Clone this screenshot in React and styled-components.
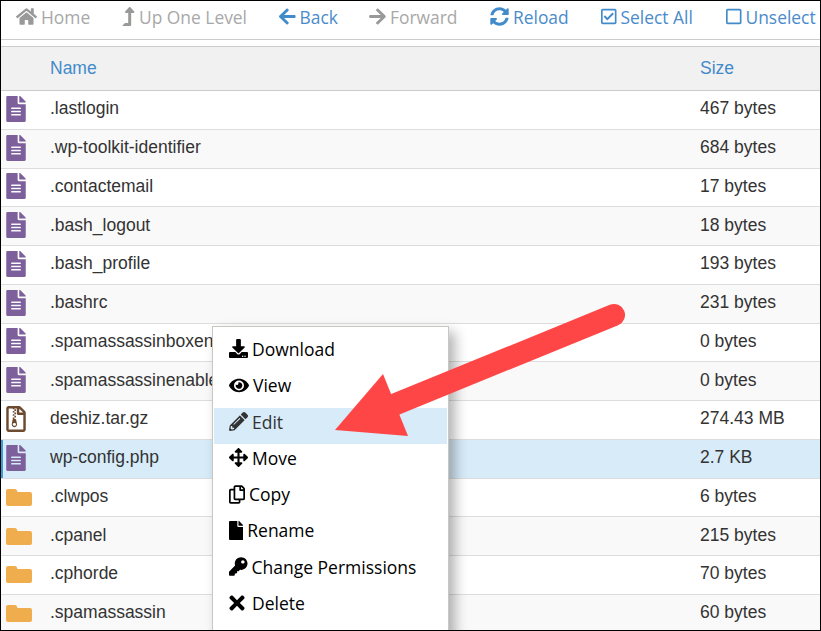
import React from 'react';
import styled, { createGlobalStyle } from 'styled-components';
import {
  FaHome, FaLevelUpAlt, FaArrowLeft, FaArrowRight, FaSyncAlt, FaRegCheckSquare, FaRegSquare,
  FaFileAlt, FaRegFileArchive, FaDownload, FaEye, FaPencilAlt, FaArrowsAlt,
  FaRegCopy, FaFile, FaKey, FaTimes,
} from 'react-icons/fa';

const FolderIcon = () => (
  <svg width="26" height="17" viewBox="0 0 26 17">
    <path d="M2 0H9Q10.5 0 11 1.5L11.5 3H24a2 2 0 0 1 2 2V15a2 2 0 0 1-2 2H2a2 2 0 0 1-2-2V2a2 2 0 0 1 2-2Z" fill="currentColor" />
  </svg>
);

const tools = [
  { label: 'Home', Icon: FaHome, off: true, w: 106, iconW: 21 },
  { label: 'Up One Level', Icon: FaLevelUpAlt, off: true, w: 157, iconW: 13 },
  { label: 'Back', Icon: FaArrowLeft, w: 90, iconW: 16.6 },
  { label: 'Forward', Icon: FaArrowRight, off: true, w: 121, iconW: 17 },
  { label: 'Reload', Icon: FaSyncAlt, w: 111, iconW: 19 },
  { label: 'Select All', Icon: FaRegCheckSquare, w: 125, iconW: 15.5 },
  { label: 'Unselect', Icon: FaRegSquare, w: 100, iconW: 15.5 },
];

const files = [
  ['.lastlogin', '467 bytes', 'doc'],
  ['.wp-toolkit-identifier', '684 bytes', 'doc'],
  ['.contactemail', '17 bytes', 'doc'],
  ['.bash_logout', '18 bytes', 'doc'],
  ['.bash_profile', '193 bytes', 'doc'],
  ['.bashrc', '231 bytes', 'doc'],
  ['.spamassassinboxenable', '0 bytes', 'doc'],
  ['.spamassassinenable', '0 bytes', 'doc'],
  ['deshiz.tar.gz', '274.43 MB', 'zip'],
  ['wp-config.php', '2.7 KB', 'doc', true],
  ['.clwpos', '6 bytes', 'dir'],
  ['.cpanel', '215 bytes', 'dir'],
  ['.cphorde', '70 bytes', 'dir'],
  ['.spamassassin', '60 bytes', 'dir'],
];

const menu = [
  { label: 'Download', Icon: FaDownload, iconW: 19 },
  { label: 'View', Icon: FaEye, iconW: 20 },
  { label: 'Edit', Icon: FaPencilAlt, iconW: 19, active: true },
  { label: 'Move', Icon: FaArrowsAlt, iconW: 19 },
  { label: 'Copy', Icon: FaRegCopy, iconW: 16 },
  { label: 'Rename', Icon: FaFile, iconW: 14.25 },
  { label: 'Change Permissions', Icon: FaKey, iconW: 18.5 },
  { label: 'Delete', Icon: FaTimes, iconW: 16, iconH: 22, gap: 7 },
];

const kinds = {
  doc: { Icon: FaFileAlt, color: '#7c5f9b', size: 26, pad: 2, top: 0 },
  zip: { Icon: FaRegFileArchive, color: '#6b4a2f', size: 26, pad: 2, top: 0 },
  dir: { Icon: FolderIcon, color: '#f0ad4e', pad: 5, top: 2 },
};

export default function App() {
  return (
    <Page>
      <GlobalStyle />
      <Toolbar>
        {tools.map(({ label, Icon, off, w, iconW }) => (
          <Tool key={label} $off={off} $w={w} $iconW={iconW}>
            <Icon />
            {label}
          </Tool>
        ))}
      </Toolbar>
      <Table>
        <HeadRow>
          <span />
          <HeadCell>Name</HeadCell>
          <HeadCell>Size</HeadCell>
        </HeadRow>
        <div>
          {files.map(([name, size, kind, selected]) => {
            const { Icon, color, size: iconSize, pad, top } = kinds[kind];
            return (
              <Row key={name} $selected={selected}>
                <IconCell $color={color} $pad={pad} $top={top}><Icon size={iconSize} /></IconCell>
                <span>{name}</span>
                <span>{size}</span>
              </Row>
            );
          })}
        </div>
      </Table>
      <Menu>
        {menu.map(({ label, Icon, active, iconW, iconH, gap }) => (
          <MenuItem key={label} $active={active} $iconW={iconW} $iconH={iconH} $gap={gap}>
            <Icon />
            {label}
          </MenuItem>
        ))}
      </Menu>
      <Arrow viewBox="0 0 821 631">
        <path d="M614 315 L396 404" stroke="#ff4646" strokeWidth="22" strokeLinecap="round" fill="none" />
        <path d="M383 374 L335 430 L408 436 Z" fill="#ff4646" />
      </Arrow>
    </Page>
  );
}

const GlobalStyle = createGlobalStyle`
  html, body {
    margin: 0;
    padding: 0;
    background: #fff;
  }
`;

const Page = styled.div`
  position: relative;
  width: 821px;
  height: 631px;
  overflow: hidden;
  box-sizing: border-box;
  border: 1px solid #000;
  font-family: "Liberation Sans", Arial, sans-serif;
  color: #333;
`;

const Toolbar = styled.div`
  display: flex;
  align-items: center;
  box-sizing: border-box;
  height: 39px;
  padding: 0 0 7px 15px;
  border-bottom: 1px solid #ccc;
  white-space: nowrap;
`;

const Tool = styled.div`
  display: flex;
  align-items: center;
  gap: 4px;
  flex: none;
  width: ${(p) => p.$w}px;
  font-family: "Open Sans", sans-serif;
  font-size: 17.4px;
  color: ${(p) => (p.$off ? '#a8a8a8' : '#4a8bcb')};

  svg {
    flex: none;
    width: ${(p) => p.$iconW}px;
    height: 19px;
    color: ${(p) => (p.$off ? '#999' : '#428bca')};
  }
`;

const Table = styled.div`
  margin-top: 6px;
  border-top: 1px solid #ccc;
  font-size: 17.5px;
`;

const HeadRow = styled.div`
  display: grid;
  grid-template-columns: 49px 650px 1fr;
  align-items: center;
  height: 43px;
  background: #f1f1f1;
  border-bottom: 1px solid #ccc;
`;

const HeadCell = styled.span`
  color: #428bca;
`;

const Row = styled.div`
  display: grid;
  grid-template-columns: 49px 650px 1fr;
  align-items: center;
  box-sizing: border-box;
  height: 38.76px;
  padding-bottom: 2px;
  border-bottom: 1px solid #ddd;
  background: #fff;

  &:nth-child(even) {
    background: #f9f9f9;
  }

  ${(p) => p.$selected && `
    &&& {
      background: #d7ebf9;
      box-shadow: inset 2px 0 0 #3f9bd6;
    }
  `}
`;

const IconCell = styled.span`
  display: flex;
  align-items: center;
  padding: ${(p) => p.$top}px 0 0 ${(p) => p.$pad}px;
  color: ${(p) => p.$color};
`;

const Menu = styled.div`
  position: absolute;
  left: 211px;
  top: 325px;
  width: 237px;
  height: 320px;
  box-sizing: border-box;
  padding: 8.5px 1px 0;
  background: #fff;
  border: 1px solid #c8c8c0;
  box-shadow: 6px 6px 12px rgba(0, 0, 0, 0.3);
`;

const MenuItem = styled.div`
  display: flex;
  align-items: center;
  gap: ${(p) => p.$gap || 4}px;
  box-sizing: border-box;
  height: 36.3px;
  padding: 0 0 9.4px 15px;
  font-family: "Open Sans", sans-serif;
  font-size: 17.5px;
  color: ${(p) => (p.$active ? '#333' : '#000')};
  background: ${(p) => (p.$active ? '#d7ebf9' : 'transparent')};

  svg {
    flex: none;
    width: ${(p) => p.$iconW}px;
    height: ${(p) => p.$iconH || 19}px;
  }
`;

const Arrow = styled.svg`
  position: absolute;
  left: -1px;
  top: -1px;
  width: 821px;
  height: 631px;
  pointer-events: none;
`;
